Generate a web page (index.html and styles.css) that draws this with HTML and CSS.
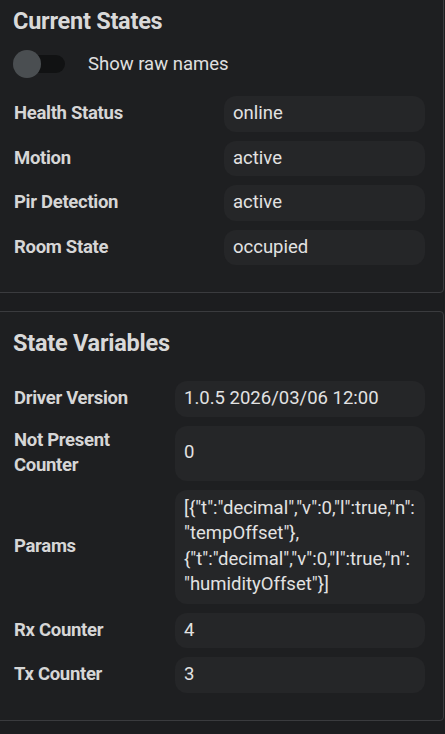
FILE: index.html
```html
<!DOCTYPE html>
<html>
<head>
<meta charset="utf-8">
<link rel="stylesheet" href="styles.css">
</head>
<body>
<section class="card card-top">
  <h2 class="title">Current States</h2>
  <div class="toggle-row">
    <span class="switch"><span class="track"></span><span class="thumb"></span></span>
    <span class="toggle-label">Show raw names</span>
  </div>
  <div class="grid grid-states">
    <div class="label">Health Status</div><div class="value">online</div>
    <div class="label">Motion</div><div class="value">active</div>
    <div class="label">Pir Detection</div><div class="value">active</div>
    <div class="label">Room State</div><div class="value">occupied</div>
  </div>
</section>
<section class="card card-vars">
  <h2 class="title">State Variables</h2>
  <div class="grid grid-vars">
    <div class="label">Driver Version</div><div class="value">1.0.5 2026/03/06 12:00</div>
    <div class="label">Not Present Counter</div><div class="value">0</div>
    <div class="label">Params</div><div class="value multi">[{"t":"decimal","v":0,"l":true,"n":<br>"tempOffset"},<br>{"t":"decimal","v":0,"l":true,"n":<br>"humidityOffset"}]</div>
    <div class="label">Rx Counter</div><div class="value">4</div>
    <div class="label">Tx Counter</div><div class="value">3</div>
  </div>
</section>
</body>
</html>
```

FILE: styles.css
```css
html, body {
  margin: 0;
  padding: 0;
  background: #1c1d1f;
  font-family: Roboto, "Liberation Sans", sans-serif;
  color: #dcdcdc;
  overflow: hidden;
}

.card {
  box-sizing: border-box;
  width: 452px;
  margin-left: -8px;
  background: #1e1f21;
  border: 1px solid #3a3b3e;
  border-radius: 4px;
  padding: 15px 18px 27px 21px;
}

.card-top {
  margin-top: -11px;
}

.card-vars {
  margin-top: 18px;
}

.title {
  margin: 0 0 0 -1px;
  font-size: 23.5px;
  line-height: 32px;
  font-weight: 700;
  letter-spacing: -0.25px;
  color: #d9d9d9;
}

.toggle-row {
  display: flex;
  align-items: center;
  margin-top: 13px;
  height: 28px;
  margin-bottom: 18px;
}

.switch {
  position: relative;
  width: 52px;
  height: 28px;
  margin-left: -1px;
}

.track {
  position: absolute;
  left: 2px;
  right: 0;
  top: 5px;
  height: 18px;
  border-radius: 9px;
  background: #111213;
}

.thumb {
  position: absolute;
  left: 0;
  top: 0;
  width: 28px;
  height: 28px;
  border-radius: 50%;
  background: #4a4e51;
}

.toggle-label {
  margin-left: 23px;
  font-size: 18.5px;
  color: #e0e0e0;
}

.grid {
  display: grid;
  row-gap: 9px;
  align-items: center;
}

.grid-states {
  grid-template-columns: 210px 1fr;
}

.grid-vars {
  margin-top: 22px;
  grid-template-columns: 161px 1fr;
}

.label {
  font-size: 18.5px;
  font-weight: 700;
  line-height: 25.5px;
  padding: 2px 0;
  color: #d6d6d6;
  letter-spacing: -0.3px;
}

.value {
  box-sizing: border-box;
  align-self: stretch;
  display: flex;
  align-items: center;
  min-height: 35px;
  padding: 5px 9px;
  background: #252628;
  border-radius: 12px;
  font-size: 18.5px;
  line-height: 25.5px;
  color: #e2e2e2;
}

.value.multi {
  display: block;
  padding: 6px 9px;
  white-space: nowrap;
}
```
